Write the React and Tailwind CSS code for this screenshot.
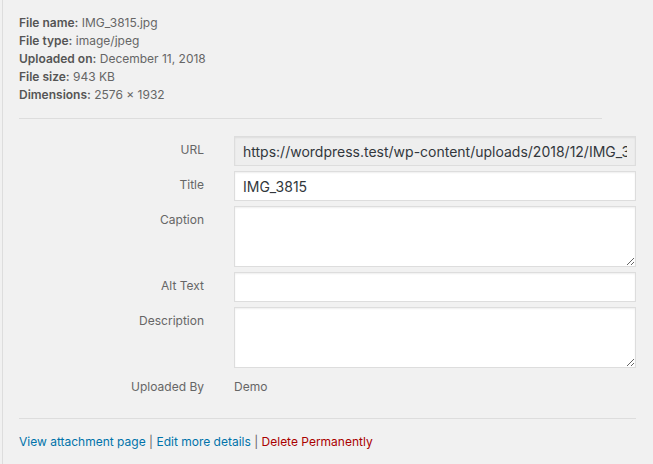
import React from 'react';

const font = { fontFamily: 'Inter, "Liberation Sans", sans-serif' };

function Field({ label, children, top = 'pt-[6px]' }) {
  return (
    <div className="flex items-start">
      <label className={`w-[185px] shrink-0 text-right text-[12px] leading-[16px] text-[#666] ${top}`}>{label}</label>
      <div className="ml-[30px] flex-1">{children}</div>
    </div>
  );
}

const inputCls =
  'w-full h-[30px] border border-[#ddd] px-[8px] text-[14px] text-[#32373c] shadow-[inset_0_1px_2px_rgba(0,0,0,0.07)] outline-none';

export default function App() {
  const details = [
    ['File name:', 'IMG_3815.jpg'],
    ['File type:', 'image/jpeg'],
    ['Uploaded on:', 'December 11, 2018'],
    ['File size:', '943 KB'],
    ['Dimensions:', '2576 × 1932'],
  ];

  return (
    <div className="w-[653px] h-[464px] bg-[#f1f1f1] overflow-hidden" style={font}>
      <div className="ml-[2px] h-full border-l border-[#ddd] pl-[16px] pr-[17px] pt-[14px]">
        <div className="w-[583px] border-b border-[#ddd] pb-[14px]">
          {details.map(([k, v]) => (
            <div key={k} className="text-[12px] leading-[18px] text-[#666]">
              <strong className="font-semibold text-[#555]">{k}</strong> {v}
            </div>
          ))}
        </div>

        <div className="mt-[17px] flex flex-col gap-[5px]">
          <Field label="URL">
            <input
              readOnly
              value="https://wordpress.test/wp-content/uploads/2018/12/IMG_3815.jpg"
              className={`${inputCls} bg-[#eee]`}
            />
          </Field>
          <Field label="Title">
            <input readOnly value="IMG_3815" className={`${inputCls} bg-white`} />
          </Field>
          <Field label="Caption">
            <textarea className="block w-full h-[61px] border border-[#ddd] bg-white px-[8px] text-[14px] shadow-[inset_0_1px_2px_rgba(0,0,0,0.07)] outline-none resize-y" />
          </Field>
          <Field label="Alt Text">
            <input readOnly value="" className={`${inputCls} bg-white`} />
          </Field>
          <Field label="Description">
            <textarea className="block w-full h-[61px] border border-[#ddd] bg-white px-[8px] text-[14px] shadow-[inset_0_1px_2px_rgba(0,0,0,0.07)] outline-none resize-y" />
          </Field>
          <Field label="Uploaded By">
            <div className="pt-[6px] text-[12px] leading-[16px] text-[#666]">Demo</div>
          </Field>
        </div>

        <div className="mt-[23px] border-t border-[#ddd] pt-[14px] text-[12px] leading-[18px] text-[#666]">
          <a className="text-[#0073aa]">View attachment page</a>
          {' | '}
          <a className="text-[#0073aa]">Edit more details</a>
          {' | '}
          <a className="text-[#a00]">Delete Permanently</a>
        </div>
      </div>
    </div>
  );
}
